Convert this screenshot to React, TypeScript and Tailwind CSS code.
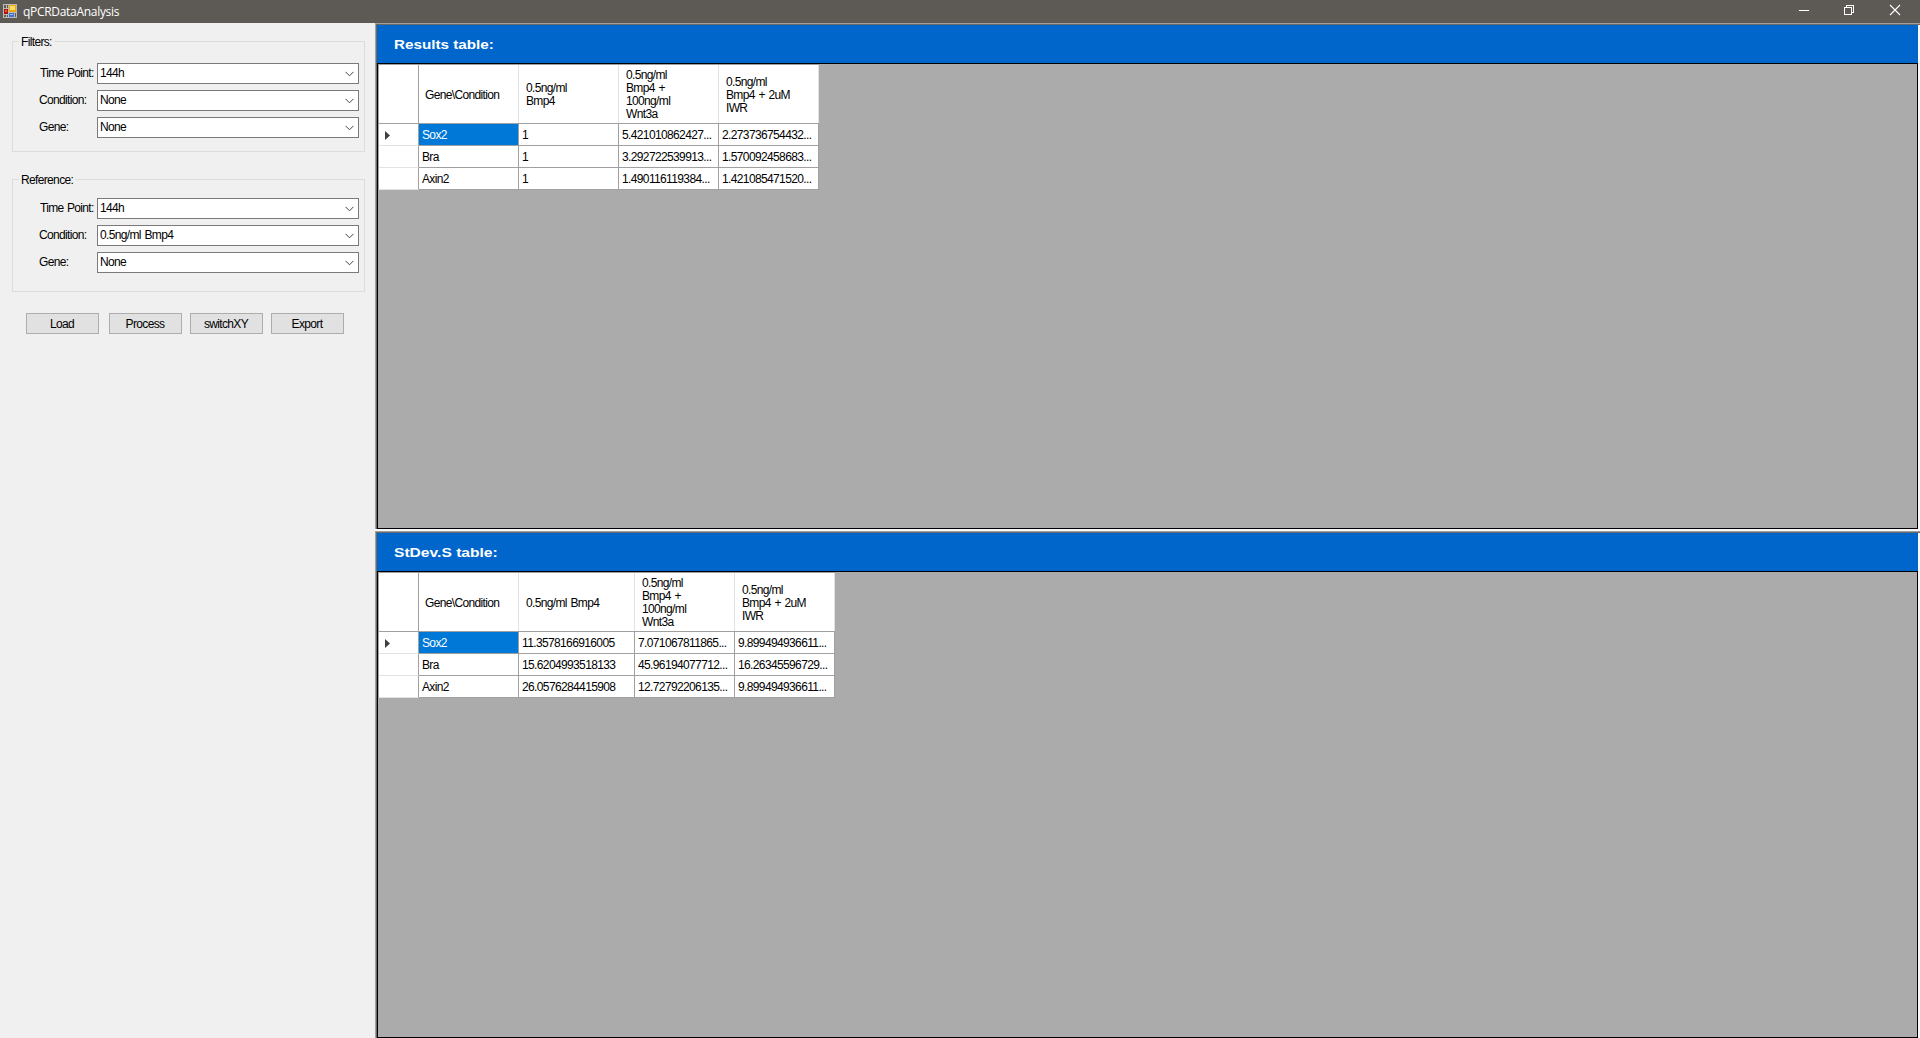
import React from "react";

type Column = { title: string[]; width: string };

type GridData = { columns: Column[]; rows: string[][]; width: string };

const results: GridData = {
  width: "w-[441px]",
  columns: [
    { title: ["Gene\\Condition"], width: "w-[100px]" },
    { title: ["0.5ng/ml", "Bmp4"], width: "w-[100px]" },
    { title: ["0.5ng/ml", "Bmp4 +", "100ng/ml", "Wnt3a"], width: "w-[100px]" },
    { title: ["0.5ng/ml", "Bmp4 + 2uM", "IWR"], width: "w-[100px]" },
  ],
  rows: [
    ["Sox2", "1", "5.421010862427...", "2.273736754432..."],
    ["Bra", "1", "3.292722539913...", "1.570092458683..."],
    ["Axin2", "1", "1.490116119384...", "1.421085471520..."],
  ],
};

const deviations: GridData = {
  width: "w-[457px]",
  columns: [
    { title: ["Gene\\Condition"], width: "w-[100px]" },
    { title: ["0.5ng/ml Bmp4"], width: "w-[116px]" },
    { title: ["0.5ng/ml", "Bmp4 +", "100ng/ml", "Wnt3a"], width: "w-[100px]" },
    { title: ["0.5ng/ml", "Bmp4 + 2uM", "IWR"], width: "w-[100px]" },
  ],
  rows: [
    ["Sox2", "11.3578166916005", "7.071067811865...", "9.899494936611..."],
    ["Bra", "15.6204993518133", "45.96194077712...", "16.26345596729..."],
    ["Axin2", "26.0576284415908", "12.72792206135...", "9.899494936611..."],
  ],
};

function AppIcon() {
  return (
    <svg width="14" height="14" viewBox="0 0 14 14" shapeRendering="crispEdges">
      <path d="M0 0h14v14H0z" fill="#b9b9b7" />
      <path d="M1 1h4v3H1zM1 11h4v2H1zM12 9h1v4h-1z" fill="#5f5b56" />
      <path d="M3 1h1v3H3zM3 11h1v2H3z" fill="#b9b9b7" />
      <path d="M1 5h4v5H1z" fill="#b3120b" />
      <path d="M2 6h2v2H2z" fill="#f2543c" />
      <path d="M6 1h7v7H6z" fill="#e9a80e" />
      <path d="M7 2h5v4H7z" fill="#ffdc66" />
      <path d="M6 9h5v4H6z" fill="#3d74d6" />
      <path d="M7 10h3v1H7z" fill="#8fb8f7" />
    </svg>
  );
}

function TitleBar() {
  return (
    <header className="flex h-[23px] shrink-0 items-center bg-[#5d5a56] pr-px pl-[3px] text-white">
      <div className="-mt-px">
        <AppIcon />
      </div>
      <span className="ml-[6px] pt-px font-['Open_Sans',sans-serif] text-[12px] leading-[16px] tracking-[-0.3px]">
        qPCRDataAnalysis
      </span>
      <div className="ml-auto flex h-full">
        <svg width="46" height="23" fill="none" stroke="#fff" shapeRendering="crispEdges">
          <path d="M18 10.5h10" />
        </svg>
        <svg width="46" height="23" fill="none" stroke="#fff" shapeRendering="crispEdges">
          <path d="M17.5 7.5h7v7h-7zM19.5 7V5.5h7v7H25" />
        </svg>
        <svg width="46" height="23" fill="none" stroke="#fff" strokeWidth="1.1">
          <path d="M17 5l10 10M27 5L17 15" />
        </svg>
      </div>
    </header>
  );
}

function Combo({ label, value, indent }: { label: string; value: string; indent?: boolean }) {
  return (
    <div className="flex h-[21px] items-center">
      <span className={`w-[58px] shrink-0 whitespace-nowrap leading-[13px] ${indent ? "pl-px tracking-[-0.7px]" : ""}`}>
        {label}
      </span>
      <div className="flex h-[21px] w-[262px] items-center justify-between border border-[#7a7a7a] bg-white pr-[4px] pl-[2px]">
        <span className="leading-[13px]">{value}</span>
        <svg width="9" height="6" viewBox="0 0 9 6" fill="none" stroke="#444" className="mt-px">
          <path d="M.5 .8l4 4 4-4" />
        </svg>
      </div>
    </div>
  );
}

function Group({ title, values, height }: { title: string; values: string[]; height: string }) {
  return (
    <section className={`w-[353px] border border-[#dcdcdc] ${height}`}>
      <div className="-mt-[6px] ml-[6px] h-[13px] w-fit bg-[#f0f0f0] pr-[2px] pl-[2px] leading-[13px]">{title}</div>
      <div className={`ml-[26px] flex flex-col gap-[6px] ${title === "Filters:" ? "mt-[14px]" : "mt-[11px]"}`}>
        <Combo label="Time Point:" value={values[0]} indent />
        <Combo label="Condition:" value={values[1]} />
        <Combo label="Gene:" value={values[2]} />
      </div>
    </section>
  );
}

function Button({ children }: { children: React.ReactNode }) {
  return (
    <button className="h-[21px] w-[73px] border border-[#adadad] bg-[#e1e1e1] pt-px pr-px text-center leading-[18px]">
      {children}
    </button>
  );
}

function Sidebar() {
  return (
    <aside className="w-[375px] shrink-0 bg-[#f0f0f0] pt-[18px] pl-[12px]">
      <Group title="Filters:" values={["144h", "None", "None"]} height="h-[111px]" />
      <div className="h-[27px]" />
      <Group title="Reference:" values={["144h", "0.5ng/ml Bmp4", "None"]} height="h-[113px]" />
      <div className="mt-[21px] ml-[14px] flex gap-[8px]">
        <div className="mr-[2px] flex">
          <Button>Load</Button>
        </div>
        <Button>Process</Button>
        <Button>switchXY</Button>
        <Button>Export</Button>
      </div>
    </aside>
  );
}

function DataGrid({ data }: { data: GridData }) {
  return (
    <div className={`border-t border-l border-[#a0a0a0] ${data.width}`}>
      <div className="flex h-[59px] border-b border-[#a0a0a0] bg-white">
        <div className="w-[40px] shrink-0 border-r border-[#a0a0a0]" />
        {data.columns.map((c, i) => (
          <div
            key={i}
            className={`flex shrink-0 items-center border-r border-[#e3e3e3] ${c.width} ${
              i === 0 ? "pl-[6px]" : "pl-[7px]"
            } ${c.title.length % 2 ? "pt-[2px]" : "pt-px"}`}
          >
            <div>
              {c.title.map((line) => (
                <div key={line} className="leading-[13px] whitespace-nowrap">
                  {line}
                </div>
              ))}
            </div>
          </div>
        ))}
      </div>
      {data.rows.map((row, r) => (
        <div key={r} className="flex h-[22px]">
          <div className="flex w-[40px] shrink-0 items-center border-r border-b border-r-[#a0a0a0] border-b-[#e3e3e3] bg-white pl-[6px]">
            {r === 0 && (
              <svg width="5" height="9" viewBox="0 0 5 9" fill="#404040" className="mt-[2px]">
                <path d="M0 0l5 4.5L0 9z" />
              </svg>
            )}
          </div>
          {row.map((cell, c) => (
            <div
              key={c}
              className={`shrink-0 border-r border-b border-[#a0a0a0] pt-[5px] pl-[3px] leading-[13px] tracking-[-0.63px] whitespace-nowrap ${data.columns[c].width} ${
                r === 0 && c === 0 ? "bg-[#0078d7] text-white" : "bg-white"
              }`}
            >
              {cell}
            </div>
          ))}
        </div>
      ))}
    </div>
  );
}

function Panel({
  title,
  data,
  height,
  stretch,
}: {
  title: string;
  data: GridData;
  height: string;
  stretch: string;
}) {
  return (
    <section className={`flex flex-col border-t border-l border-[#a0a0a0] ${height}`}>
      <div className="flex min-h-0 flex-1 flex-col border-t border-l border-[#696969] pr-[2px]">
        <h2 className="h-[38px] shrink-0 bg-[#0066cc] pt-[12px] pl-[17px] text-[13px] leading-[16px] font-bold tracking-normal text-white [word-spacing:0px]">
          <span className={`inline-block origin-left ${stretch}`}>{title}</span>
        </h2>
        <div className="min-h-0 flex-1 border border-black bg-[#ababab]">
          <DataGrid data={data} />
        </div>
      </div>
    </section>
  );
}

export default function App() {
  return (
    <div className="flex h-[1038px] w-[1920px] flex-col overflow-hidden bg-[#f0f0f0] font-['Liberation_Sans',Arial,sans-serif] text-[12px] tracking-[-0.65px] text-black [word-spacing:1px]">
      <TitleBar />
      <div className="flex min-h-0 flex-1">
        <Sidebar />
        <main className="flex flex-1 flex-col gap-[2px] bg-[#f8f8f8]">
          <Panel title="Results table:" data={results} height="h-[506px]" stretch="scale-x-[1.17]" />
          <Panel title="StDev.S table:" data={deviations} height="h-[507px]" stretch="scale-x-[1.2]" />
        </main>
      </div>
    </div>
  );
}
